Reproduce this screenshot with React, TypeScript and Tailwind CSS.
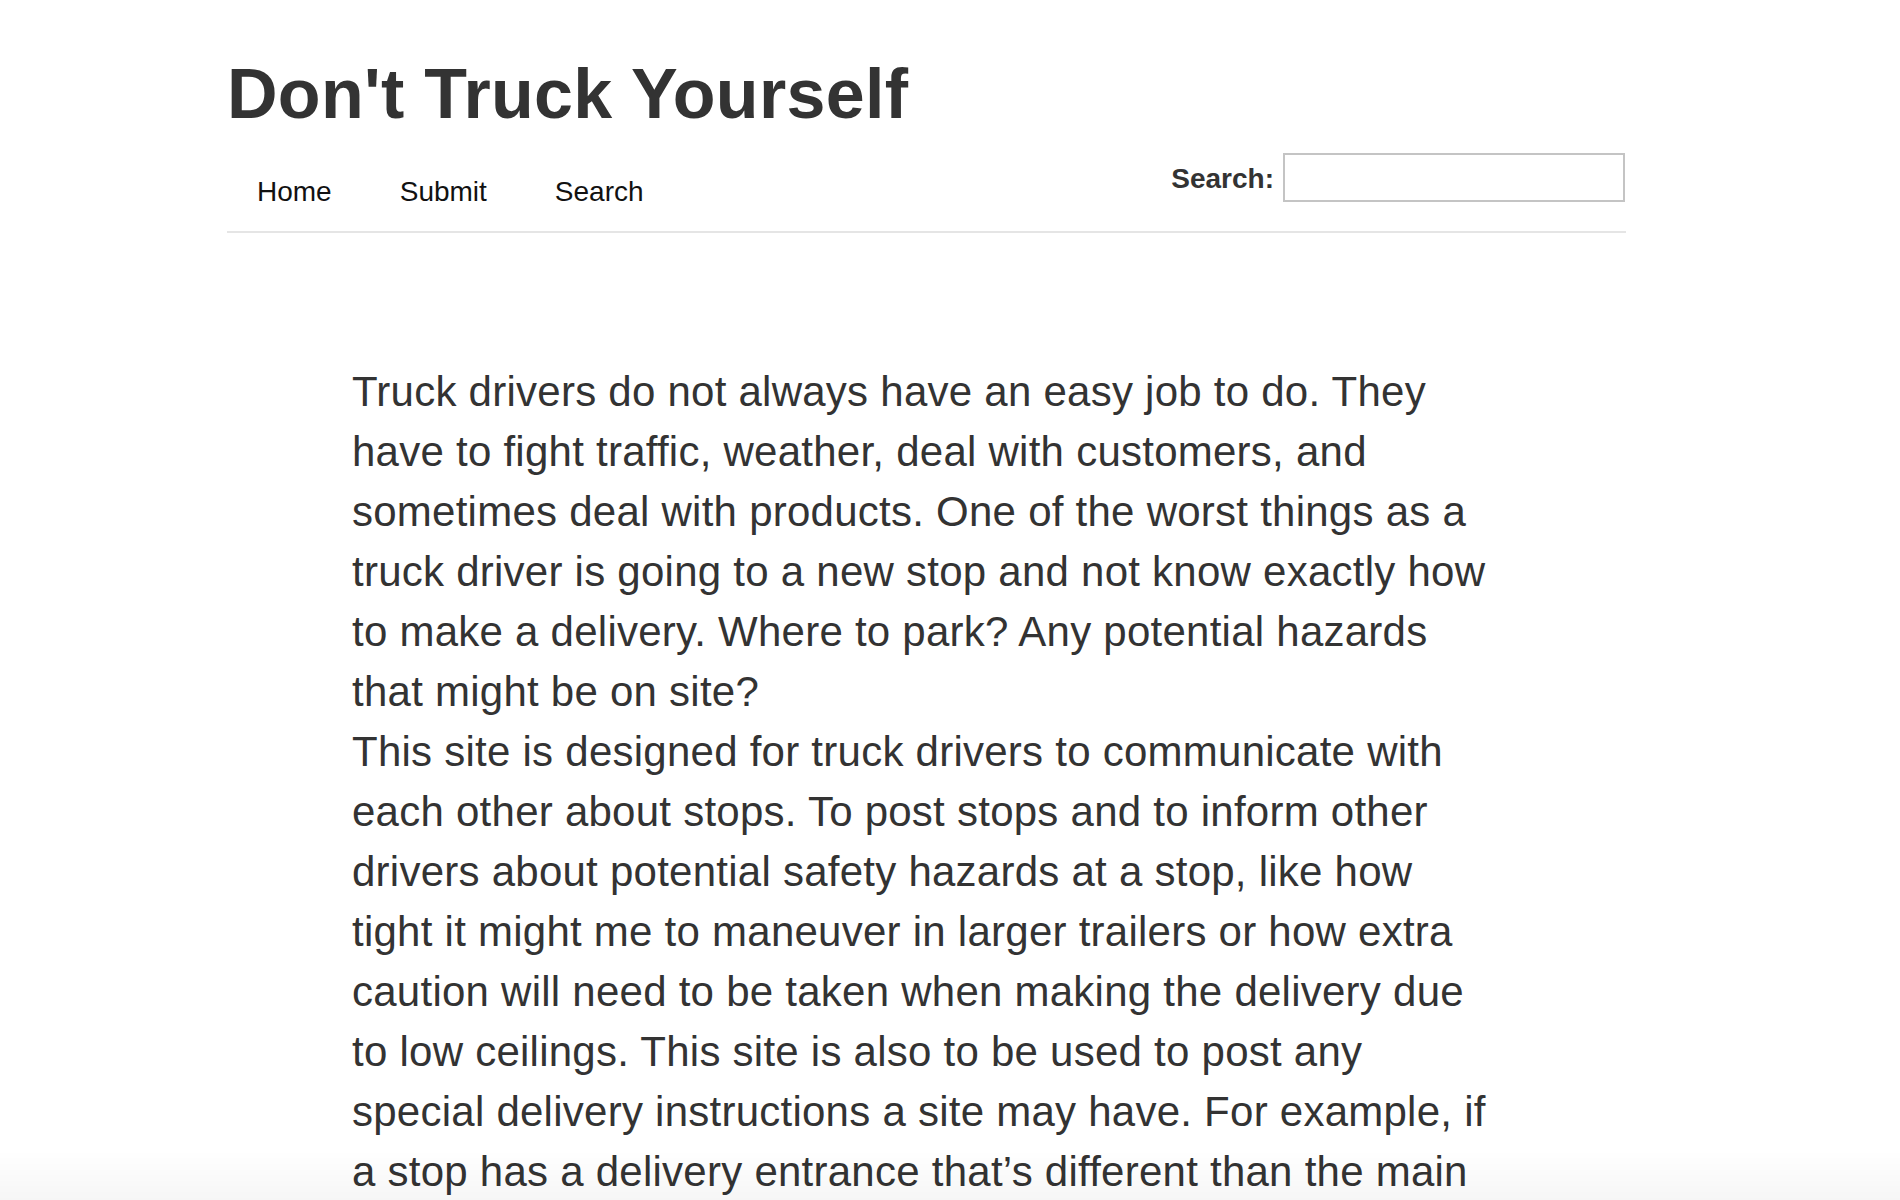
import React from "react";

const para1 = [
  "Truck drivers do not always have an easy job to do. They",
  "have to fight traffic, weather, deal with customers, and",
  "sometimes deal with products. One of the worst things as a",
  "truck driver is going to a new stop and not know exactly how",
  "to make a delivery. Where to park? Any potential hazards",
  "that might be on site?",
];

const para2 = [
  "This site is designed for truck drivers to communicate with",
  "each other about stops. To post stops and to inform other",
  "drivers about potential safety hazards at a stop, like how",
  "tight it might me to maneuver in larger trailers or how extra",
  "caution will need to be taken when making the delivery due",
  "to low ceilings. This site is also to be used to post any",
  "special delivery instructions a site may have. For example, if",
  "a stop has a delivery entrance that\u2019s different than the main",
  "entrance, drivers can let each other know before they arrive.",
];

export default function App() {
  return (
    <div className="min-h-screen w-full bg-white font-['Liberation_Sans',Arial,sans-serif] text-[#333]">
      <div className="ml-[227px] w-[1399px]">
        <h1 className="pt-[59px] text-[70px] font-bold leading-[70px] tracking-[0.3px] text-[#333]">
          Don't Truck Yourself
        </h1>
        <div className="flex items-start justify-between border-b-2 border-[#e5e5e5]">
          <ul className="flex gap-[8px] pt-[43px] pb-[19px]">
            {["Home", "Submit", "Search"].map((l) => (
              <li key={l}>
                <a href="#" className="block px-[30px] text-[28px] leading-[40px] text-[#111]">
                  {l}
                </a>
              </li>
            ))}
          </ul>
          <form className="flex items-start pt-[24px] mr-[1px]" onSubmit={(e) => e.preventDefault()}>
            <label className="mt-[6px] mr-[9px] text-[28px] font-bold leading-[40px] text-[#333]">
              Search:
            </label>
            <input
              type="text"
              className="h-[49px] w-[342px] border-2 border-[#c4c4c4] bg-white outline-none"
            />
          </form>
        </div>
        <div className="pl-[125px] pt-[129px] text-[42px] leading-[60px] tracking-[0.25px] text-[#333]">
          <p>
            {para1.map((l, i) => (
              <span key={i} className="block whitespace-nowrap">
                {l}
              </span>
            ))}
          </p>
          <p>
            {para2.map((l, i) => (
              <span key={i} className="block whitespace-nowrap">
                {l}
              </span>
            ))}
          </p>
        </div>
      </div>
      <div className="pointer-events-none fixed bottom-0 left-0 right-0 h-[50px] bg-gradient-to-b from-transparent to-black/[0.035]" />
    </div>
  );
}
